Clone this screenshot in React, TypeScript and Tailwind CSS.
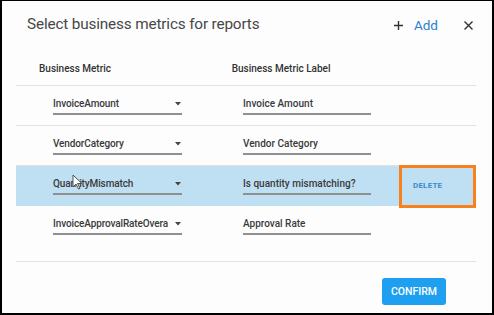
import React from "react";

type Metric = { metric: string; label: string; selected?: boolean };

const metrics: Metric[] = [
  { metric: "InvoiceAmount", label: "Invoice Amount" },
  { metric: "VendorCategory", label: "Vendor Category" },
  { metric: "QuantityMismatch", label: "Is quantity mismatching?", selected: true },
  { metric: "InvoiceApprovalRateOvera", label: "Approval Rate" },
];

function Caret() {
  return (
    <svg width="6" height="4" viewBox="0 0 6 4" className="shrink-0">
      <path d="M0 0 L6 0 L3 3.5 Z" fill="#444" />
    </svg>
  );
}

function Cursor() {
  return (
    <svg
      width="11"
      height="16"
      viewBox="0 0 11 16"
      className="absolute left-[56px] top-[8px] pointer-events-none"
    >
      <path d="M1 1 L1 13 L4 10 L6.5 15 L8 14.3 L5.6 9.5 L9.8 9.5 Z" fill="#fff" stroke="#444" strokeWidth="0.9" />
    </svg>
  );
}

function Row({ m, last }: { m: Metric; last: boolean }) {
  return (
    <div
      className={`relative flex h-[40px] items-center ${
        m.selected ? "bg-[#bfdff2]" : last ? "" : "border-b border-[#e2e2e2]"
      }`}
    >
      {m.selected && <Cursor />}
      <div className="ml-[37px] flex w-[129px] flex-col self-start pt-[11px]">
        <div className="flex h-[14px] items-center justify-between pr-[1px]">
          <span className="w-[119px] overflow-hidden whitespace-nowrap text-[10px] font-medium leading-[14px] tracking-[-0.12px] text-[#3a3a3a]">
            {m.metric}
          </span>
          <Caret />
        </div>
        <div className="mt-[2px] h-[2px] bg-[#8f8f8f]" />
      </div>
      <div className="ml-[61px] flex w-[128px] flex-col self-start pt-[11px]">
        <span className="h-[14px] whitespace-nowrap text-[10px] font-medium leading-[14px] text-[#3a3a3a]">
          {m.label}
        </span>
        <div className="mt-[2px] h-[2px] bg-[#8f8f8f]" />
      </div>
      {m.selected && (
        <div className="ml-auto flex h-[43px] w-[77px] shrink-0 items-center border-[3px] border-[#f8811c] pl-[11px]">
          <span className="text-[8px] font-bold tracking-[0.2px] text-[#3a8bd0]">DELETE</span>
        </div>
      )}
    </div>
  );
}

export default function App() {
  return (
    <div className="flex h-[315px] w-[494px] flex-col border-t border-l-2 border-r-2 border-b-2 border-black bg-[#fdfdfd] font-['Roboto',sans-serif]">
      <div className="flex h-[46px] shrink-0 items-center pl-[25px] pr-[19px]">
        <h1 className="text-[15.3px] font-normal tracking-[-0.15px] text-[#474747]">
          Select business metrics for reports
        </h1>
        <div className="ml-auto mt-[3px] flex items-center">
          <svg width="9" height="9" viewBox="0 0 9 9">
            <path d="M4.5 0 V9 M0 4.5 H9" stroke="#333" strokeWidth="1.4" />
          </svg>
          <span className="ml-[11px] text-[13.5px] leading-none text-[#2a7fcc]">Add</span>
          <svg width="9" height="9" viewBox="0 0 9 9" className="ml-[26px]">
            <path d="M0.5 0.5 L8.5 8.5 M8.5 0.5 L0.5 8.5" stroke="#333" strokeWidth="1.4" />
          </svg>
        </div>
      </div>

      <div className="ml-[14px] mr-[16px] flex h-[38px] shrink-0 items-center pt-[4px] text-[10px] font-medium text-[#333]">
        <span className="ml-[23px] w-[192.7px]">Business Metric</span>
        <span>Business Metric Label</span>
      </div>

      <div className="ml-[14px] mr-[16px] border-t border-b border-[#e2e2e2] pb-[15px]">
        {metrics.map((m, i) => (
          <Row key={m.metric} m={m} last={i === metrics.length - 1} />
        ))}
      </div>

      <div className="flex justify-end pr-[46px] pt-[16px]">
        <button className="flex h-[27px] w-[64px] items-center justify-center rounded-[3px] bg-[#1e9ff0] text-[10.5px] font-medium text-white">
          CONFIRM
        </button>
      </div>
    </div>
  );
}
